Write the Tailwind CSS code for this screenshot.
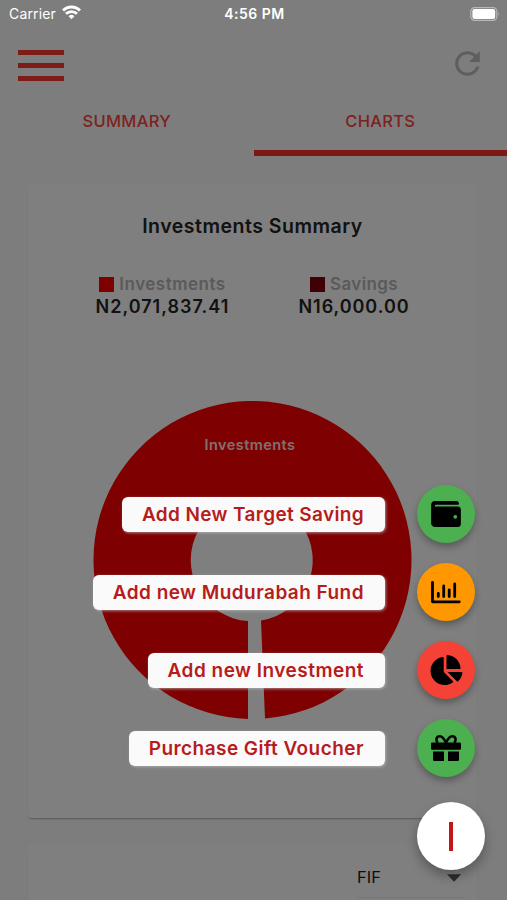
<!DOCTYPE html>
<html lang="en">
<head>
    <meta charset="UTF-8">
    <meta name="viewport" content="width=device-width, initial-scale=1.0">
    <title>Investments - Charts</title>
    <script src="https://cdn.jsdelivr.net/npm/@tailwindcss/browser@4"></script>
    <style>
        body {
            font-family: 'Inter', 'Liberation Sans', sans-serif;
        }
    </style>
</head>
<body class="bg-[#fafafa]">
<div class="relative w-full h-[900px] overflow-hidden">

    <!-- Header -->
    <header class="h-[100px] pt-[50px] px-[18px] flex justify-between items-start">
        <div class="w-[46px] flex flex-col gap-[8px]">
            <span class="h-[5px] bg-[#fd3830]"></span>
            <span class="h-[5px] bg-[#fd3830]"></span>
            <span class="h-[5px] bg-[#fd3830]"></span>
        </div>
        <svg class="w-[37px] h-[37px] -mt-[5px] mr-[3px]" viewBox="0 0 24 24" fill="#bcbcbc">
            <path d="M17.65 6.35C16.2 4.9 14.21 4 12 4c-4.42 0-7.99 3.58-7.99 8s3.57 8 7.99 8c3.73 0 6.84-2.55 7.73-6h-2.08c-.82 2.33-3.04 4-5.65 4-3.31 0-6-2.69-6-6s2.69-6 6-6c1.66 0 3.14.69 4.22 1.78L13 11h7V4l-2.35 2.35z"/>
        </svg>
    </header>

    <!-- Tabs -->
    <nav class="h-[56px] grid grid-cols-2 text-center text-[16.5px] leading-[43px] font-medium text-[#fb453e]">
        <div class="tracking-[0.3px]">SUMMARY</div>
        <div class="tracking-[0.3px] border-b-6 border-[#fd3028]">CHARTS</div>
    </nav>

    <!-- Summary card -->
    <section class="mt-[29px] ml-[28px] mr-[30px] h-[633px] bg-white rounded-[4px] shadow-[0_2px_2px_-1px_rgba(0,0,0,0.3)] text-center">
        <h1 class="pt-[27px] text-[19.5px] leading-[29px] font-semibold tracking-[0.5px] text-[#242424]">Investments Summary</h1>
        <div class="mt-[32px] flex">
            <div class="w-[269px]">
                <div class="flex items-center justify-center gap-[5px] text-[17px] leading-[23px] font-semibold tracking-[0.5px] text-[#b4b4b4]"><span class="size-[15px] bg-[#fe0000]"></span>Investments</div>
                <div class="text-[18px] leading-[21px] font-semibold tracking-[1px] text-[#242424]">N2,071,837.41</div>
            </div>
            <div class="w-[114px] text-nowrap">
                <div class="flex items-center justify-center gap-[5px] text-[17px] leading-[23px] font-semibold tracking-[0.4px] text-[#b4b4b4]"><span class="size-[15px] bg-[#80000c]"></span>Savings</div>
                <div class="text-[18px] leading-[21px] font-semibold tracking-[0.95px] text-[#242424]">N16,000.00</div>
            </div>
        </div>
        <svg class="mt-[84px] ml-[64px] w-[320px] h-[320px]" viewBox="93 401 320 320">
            <path fill="#ff0000" d="M262 620.4L266 718.5A159 159 0 1 0 249 718.93V621A61 61 0 1 1 262 620.4Z"/>
            <text x="251" y="450" text-anchor="middle" fill="#fff" fill-opacity="0.9" class="text-[14.5px] font-semibold tracking-[0.45px]">Investments</text>
        </svg>
    </section>

    <!-- Performance card -->
    <section class="mt-[26px] ml-[28px] mr-[30px] h-[120px] bg-white rounded-[4px] shadow-[0_2px_2px_-1px_rgba(0,0,0,0.3)]">
        <div class="ml-[329px] w-[108px] h-[54px] pt-[18px] border-b border-[#eeeeee] flex justify-between text-[16.5px] leading-[30px] text-[#1c1c1c]">
            <span>FIF</span>
            <svg class="w-[15px] h-[8px] mt-[12px] mr-[3px]" viewBox="0 0 16 8" fill="#5a5a5a"><path d="M0 0H15L7.5 8Z"/></svg>
        </div>
    </section>

    <div class="absolute inset-0 bg-black/50"></div>

    <!-- Status bar -->
    <div class="absolute top-0 inset-x-0 h-[27px] pl-[9px] pr-[7px] grid grid-cols-3 items-center text-white text-[14px]">
        <div class="flex items-center gap-[6px]">
            <span class="tracking-[0.15px]">Carrier</span>
            <svg class="w-[19px] h-[15px] -mt-[2px]" viewBox="0 0 19 15" fill="none" stroke="#fff" stroke-width="2.9">
                <path d="M1 5.6A12 12 0 0 1 18 5.6M4 8.8A8 8 0 0 1 15 8.8"/>
                <path d="M9.5 14.2L6.6 11.2A4.2 4.2 0 0 1 12.4 11.2Z" fill="#fff" stroke="none"/>
            </svg>
        </div>
        <div class="text-center font-semibold tracking-[0.5px]">4:56 PM</div>
        <svg class="w-[30px] h-[14px] justify-self-end" viewBox="0 0 30 14">
            <rect x="0.8" y="0.6" width="26" height="12.8" rx="3.8" fill="none" stroke="#b8b8b8" stroke-width="1.2"/>
            <rect x="2.4" y="2.1" width="22.8" height="9.8" rx="2.2" fill="#fff"/>
            <path d="M28.3 4.8Q30 7 28.3 9.2Z" fill="#b8b8b8"/>
        </svg>
    </div>

    <!-- Speed dial -->
    <div class="absolute right-[22px] top-[485px] flex flex-col items-end">
        <div class="flex flex-col items-end gap-[20px] mr-[10px] text-[19px] font-semibold text-[#b71c1c]">
            <div class="flex items-center gap-[32px]">
                <span class="h-[35px] pl-[20px] pr-[21px] leading-[36px] tracking-[0.36px] whitespace-nowrap rounded-[6px] bg-[#fafafa] shadow-[1px_1px_3px_rgba(190,190,190,0.7)]">Add New Target Saving</span>
                <span class="size-[58px] rounded-full bg-[#4caf50] shadow-[0_4px_7px_rgba(0,0,0,0.3)] flex items-center justify-center">
                    <svg class="w-[30px] h-[26px]" viewBox="0 0 512 448" fill="#000">
                        <path fill-rule="evenodd" d="M461 96H80a16 16 0 0 1 0-32H464c9 0 16-7 16-16 0-27-21-48-48-48H64C29 0 0 29 0 64V384c0 35 29 64 64 64H461c28 0 51-22 51-48V144c0-26-23-48-51-48ZM416 304a32 32 0 1 1 0-64 32 32 0 0 1 0 64Z"/>
                    </svg>
                </span>
            </div>
            <div class="flex items-center gap-[32px]">
                <span class="h-[35px] pl-[20px] pr-[21px] leading-[36px] tracking-[0.45px] whitespace-nowrap rounded-[6px] bg-[#fafafa] shadow-[1px_1px_3px_rgba(190,190,190,0.7)]">Add new Mudurabah Fund</span>
                <span class="size-[58px] rounded-full bg-[#ff9800] shadow-[0_4px_7px_rgba(0,0,0,0.3)] flex items-center justify-center">
                    <svg class="w-[30px] h-[24px]" viewBox="0 0 30 24" fill="none" stroke="#000" stroke-width="2.8" stroke-linecap="round" stroke-linejoin="round">
                        <path d="M1.5 2.3V21.8H28.3M7.3 13.5V16.5M12.7 6V16.5M18.2 9.8V16.5M23.7 4V16.5"/>
                    </svg>
                </span>
            </div>
            <div class="flex items-center gap-[32px]">
                <span class="h-[35px] pl-[20px] pr-[21px] leading-[36px] tracking-[0.48px] whitespace-nowrap rounded-[6px] bg-[#fafafa] shadow-[1px_1px_3px_rgba(190,190,190,0.7)]">Add new Investment</span>
                <span class="size-[58px] rounded-full bg-[#f44336] shadow-[0_4px_7px_rgba(0,0,0,0.3)] flex items-center justify-center">
                    <svg class="w-[33px] h-[30px]" viewBox="0 0 544 512" fill="#000">
                        <path d="M527.79 288H290.5l158.03 158.03c6.04 6.04 15.98 6.53 22.19.68 38.7-36.46 65.32-85.61 73.13-140.86 1.34-9.46-6.51-17.85-16.06-17.85zm-15.83-64.8C503.72 103.74 408.26 8.28 288.8.04 279.68-.59 272 7.1 272 16.24V240h223.77c9.14 0 16.82-7.68 16.19-16.8zM224 288V50.71c0-9.55-8.39-17.4-17.84-16.06C86.99 51.49-4.1 155.6.14 280.37 4.5 408.51 114.83 513.59 243.03 511.98c50.4-.63 96.97-16.87 135.26-44.03 7.9-5.6 8.42-17.23 1.57-24.08L224 288z"/>
                    </svg>
                </span>
            </div>
            <div class="flex items-center gap-[32px]">
                <span class="h-[35px] pl-[20px] pr-[21px] leading-[36px] tracking-[0.45px] whitespace-nowrap rounded-[6px] bg-[#fafafa] shadow-[1px_1px_3px_rgba(190,190,190,0.7)]">Purchase Gift Voucher</span>
                <span class="size-[58px] rounded-full bg-[#4caf50] shadow-[0_4px_7px_rgba(0,0,0,0.3)] flex items-center justify-center">
                    <svg class="w-[30px] h-[26px]" viewBox="0 0 30 26">
                        <rect x="0" y="7.5" width="30" height="7.3" rx="1.3"/>
                        <path d="M2 16.6H13V26H3.3A1.3 1.3 0 0 1 2 24.7ZM17 16.6H28V24.7A1.3 1.3 0 0 1 26.7 26H17Z"/>
                        <path d="M15 7.8C13 4 11.8 1.3 9 1.3C5 1.3 4.4 5.5 6.8 7.8M15 7.8C17 4 18.2 1.3 21 1.3C25 1.3 25.6 5.5 23.2 7.8" fill="none" stroke="#000" stroke-width="2.6"/>
                    </svg>
                </span>
            </div>
        </div>
        <div class="mt-[25px] size-[68px] rounded-full bg-white shadow-[0_6px_12px_rgba(0,0,0,0.3)] flex items-center justify-center">
            <span class="w-[4px] h-[29px] bg-[#c4161a]"></span>
        </div>
    </div>

</div>
</body>
</html>
